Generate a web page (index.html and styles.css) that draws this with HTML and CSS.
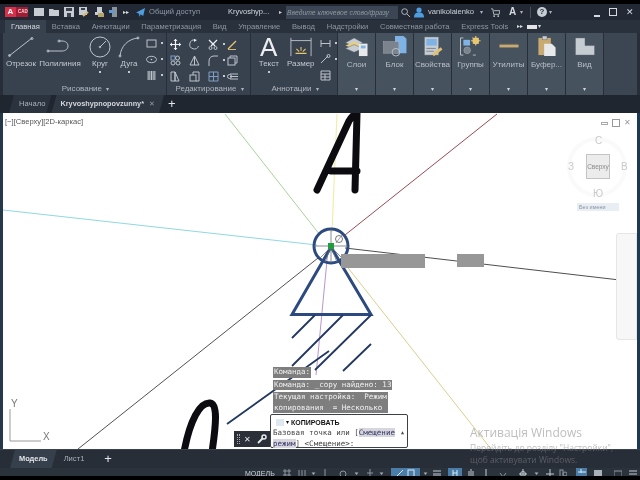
FILE: index.html
```html
<!DOCTYPE html>
<html lang="ru">
<head>
<meta charset="utf-8">
<title>AutoCAD</title>
<link rel="stylesheet" href="styles.css">
</head>
<body>
<div class="app">
  <header class="titlebar">
    <div class="logo"><span class="logo-a">A</span><span class="logo-cad">CAD</span></div>
    <div class="qat">
      <svg class="q" viewBox="0 0 10 10"><rect class="fl" x="0" y="1" width="10" height="8"/></svg>
      <svg class="q" viewBox="0 0 10 10"><path class="fl" d="M0 2h4l1 1h5v6H0z"/></svg>
      <svg class="q" viewBox="0 0 10 10"><path class="fl" d="M0 0h10v10H0z"/><rect class="dk" x="2" y="1" width="6" height="3"/><rect class="dk" x="3" y="6" width="4" height="4"/></svg>
      <svg class="q" viewBox="0 0 10 10"><path class="fl" d="M0 0h8v8H0z"/><rect class="dk" x="2" y="1" width="4" height="2"/><path class="pen" d="M4 9l5-4"/></svg>
      <svg class="q" viewBox="0 0 10 10"><path class="fl" d="M3 0h5v5H3z"/><path class="fl" d="M1 5h8v3H1z"/><path class="tan" d="M4 6h6v4H4z"/></svg>
      <svg class="q" viewBox="0 0 10 10"><path class="gr" d="M3 0h5v10H3z"/><path class="bl" d="M0 3h5v3H0z"/></svg>
    </div>
    <span class="more">&#9656;&#9656;</span>
    <svg class="plane" viewBox="0 0 10 10"><path class="bl2" d="M0 5L10 0 8 9 5 7 4 10 3 6z"/></svg>
    <span class="share">Общий доступ</span>
    <span class="docname">Kryvoshyp...</span>
    <span class="chev">&#9656;</span>
    <span class="search">Введите ключевое слово/фразу</span>
    <svg class="sicon" viewBox="0 0 10 10"><circle class="s" cx="4" cy="4" r="3.2"/><path class="s" d="M6.5 6.5L10 10"/></svg>
    <svg class="user" viewBox="0 0 10 10"><circle class="bl2" cx="5" cy="2.6" r="2.6"/><path class="bl2" d="M0 10c0-4 2-5 5-5s5 1 5 5z"/></svg>
    <span class="uname">vanikolaienko</span>
    <span class="caret t1">&#9662;</span>
    <svg class="cart" viewBox="0 0 10 10"><path class="s" d="M0 1h2l1 6h6l1-4H3"/><circle class="gf" cx="3.5" cy="9" r="1"/><circle class="gf" cx="8" cy="9" r="1"/></svg>
    <span class="a360">A</span>
    <span class="caret t2">&#9662;</span>
    <span class="sep"></span>
    <span class="help">?</span>
    <span class="caret t3">&#9662;</span>
    <div class="winctl">
      <span class="wmin"></span><span class="wmax"></span><span class="wclose">&#10005;</span>
    </div>
  </header>

  <nav class="tabs">
    <span class="tab on">Главная</span>
    <span class="tab">Вставка</span>
    <span class="tab">Аннотации</span>
    <span class="tab">Параметризация</span>
    <span class="tab">Вид</span>
    <span class="tab">Управление</span>
    <span class="tab">Вывод</span>
    <span class="tab">Надстройки</span>
    <span class="tab">Совместная работа</span>
    <span class="tab">Express Tools</span>
    <span class="tab-more">&#9656;&#9656;</span>
    <span class="tab-chip"></span>
    <span class="tab-caret">&#9662;</span>
  </nav>

  <section class="ribbon">
    <div class="panel p-draw">
      <div class="tools">
        <div class="big w-line"><svg class="bi" viewBox="0 0 28 22"><path class="s" d="M2 20L25 2"/><circle class="s" cx="2.5" cy="19.5" r="1"/><circle class="s" cx="25" cy="2.5" r="1"/></svg><span>Отрезок</span></div>
        <div class="big w-poly"><svg class="bi" viewBox="0 0 28 22"><path class="s" d="M2 15H16C24 15 24 5 16 5H13"/><circle class="s" cx="2" cy="15" r="1"/><circle class="s" cx="13" cy="5" r="1"/></svg><span>Полилиния</span></div>
        <div class="big w-circle"><svg class="bi" viewBox="0 0 22 22"><circle class="s" cx="11" cy="11" r="10"/><path class="s" d="M11 11L17 5"/><circle class="s" cx="11" cy="11" r=".8"/></svg><span>Круг</span><i class="dot"></i></div>
        <div class="big w-arc"><svg class="bi" viewBox="0 0 22 22"><path class="s" d="M2 20C3 10 10 3 20 2"/><circle class="s" cx="2" cy="20" r="1"/><circle class="s" cx="20" cy="2" r="1"/></svg><span>Дуга</span><i class="dot"></i></div>
        <div class="small-col">
          <div class="si"><svg class="sm" viewBox="0 0 11 11"><rect class="s" x="1" y="2" width="9" height="7"/></svg><i class="dot"></i></div>
          <div class="si"><svg class="sm" viewBox="0 0 11 11"><ellipse class="s" cx="5.5" cy="5.5" rx="5" ry="3.2"/><circle class="gf" cx="5.5" cy="5.5" r=".8"/></svg><i class="dot"></i></div>
          <div class="si"><svg class="sm" viewBox="0 0 11 11"><rect class="hatch" x="1" y="1" width="9" height="9"/><path class="s" d="M3 1v9M5.500 1v9M8 1v9"/></svg><i class="dot"></i></div>
        </div>
      </div>
      <div class="ptitle">Рисование <b>&#9662;</b></div>
    </div>

    <div class="panel p-edit">
      <div class="tools edit-grid">
        <svg class="sm" viewBox="0 0 11 11"><path class="w" d="M5.500 0v11M0 5.500h11"/><path class="wf" d="M5.500 0l2 2h-4zM5.500 11l2-2h-4zM0 5.500l2-2v4zM11 5.500l-2-2v4z"/></svg>
        <svg class="sm" viewBox="0 0 11 11"><path class="s" d="M9.500 7A4.500 4.500 0 1 1 6 1"/><path class="wf" d="M5 0l3 1-3 2z"/></svg>
        <div class="si"><svg class="sm" viewBox="0 0 11 11"><path class="w" d="M1 1l6 6M9 1L3 7"/><circle class="s" cx="2.500" cy="9" r="1.500"/><circle class="s" cx="7.500" cy="9" r="1.500"/></svg><i class="dot"></i></div>
        <svg class="sm" viewBox="0 0 11 11"><path class="yl" d="M1 10L9 2"/><path class="pen" d="M1 11h8"/></svg>
        <svg class="sm" viewBox="0 0 11 11"><rect class="sb" x="1" y="1" width="4" height="4"/><circle class="s" cx="7.500" cy="3" r="2"/><circle class="s" cx="3" cy="8" r="2"/><circle class="s" cx="8" cy="8" r="2"/></svg>
        <svg class="sm" viewBox="0 0 11 11"><path class="s" d="M5.500 1L10 10H1zM5.500 1v9"/></svg>
        <div class="si"><svg class="sm" viewBox="0 0 11 11"><path class="s" d="M1 11V6C1 3 3 1 6 1h4"/></svg><i class="dot"></i></div>
        <svg class="sm" viewBox="0 0 11 11"><rect class="s" x="1" y="3" width="7" height="7"/><path class="s" d="M3 3V1h7v7H8"/></svg>
        <svg class="sm" viewBox="0 0 11 11"><path class="s" d="M1 1h4v9H1zM5 1l4 9H5z"/></svg>
        <svg class="sm" viewBox="0 0 11 11"><rect class="s" x="1" y="4" width="6" height="6"/><path class="s" d="M4 4V1h6v9H7"/></svg>
        <div class="si"><svg class="sm" viewBox="0 0 11 11"><path class="sb" d="M1 1h9v9H1zM5.500 1v9M1 5.500h9"/></svg><i class="dot"></i></div>
        <svg class="sm" viewBox="0 0 11 11"><path class="s" d="M3 3h8M3 8h8M3 5.500h8"/><circle class="s" cx="2.500" cy="5.500" r="2"/></svg>
      </div>
      <div class="ptitle">Редактирование <b>&#9662;</b></div>
    </div>

    <div class="panel p-annot">
      <div class="tools">
        <div class="big w-text"><span class="bigA">A</span><span>Текст</span><i class="dot"></i></div>
        <div class="big w-dim"><svg class="bi" viewBox="0 0 24 22"><path class="s" d="M1 1v20M23 1v20M1 4h22"/><path class="yl" d="M12 11v4M7 13l3 3M17 13l-3 3M6 18h12"/></svg><span>Размер</span></div>
        <div class="small-col">
          <div class="si"><svg class="sm" viewBox="0 0 11 11"><path class="s" d="M1 2v7M10 2v7M1 5.500h9"/></svg><i class="dot"></i></div>
          <div class="si"><svg class="sm" viewBox="0 0 11 11"><path class="s" d="M1 9L8 2"/><circle class="s" cx="8.500" cy="2" r="1.500"/></svg><i class="dot"></i></div>
          <div class="si"><svg class="sm" viewBox="0 0 11 11"><path class="s" d="M1 1h9v9H1zM1 4h9M1 7h9M5 4v6"/></svg></div>
        </div>
      </div>
      <div class="ptitle">Аннотации <b>&#9662;</b></div>
    </div>

    <div class="coll">
      <svg class="ci" viewBox="0 0 26 22"><path class="lg" d="M1 7l9-5 9 5-9 4z"/><path class="ly" d="M1 10l9-4 9 4-9 4z"/><path class="lg" d="M1 13l9-4 9 4-9 4z"/><rect class="lw" x="15" y="8" width="9" height="13"/><rect class="lb" x="17" y="10" width="5" height="3"/></svg>
      <span>Слои</span><b>&#9662;</b>
    </div>
    <div class="coll">
      <svg class="ci" viewBox="0 0 26 22"><path class="lb" d="M13 0h9l3 3v15H13z"/><rect class="lm" x="1" y="6" width="16" height="12"/><circle class="ol" cx="14" cy="17" r="4"/></svg>
      <span>Блок</span><b>&#9662;</b>
    </div>
    <div class="coll">
      <svg class="ci" viewBox="0 0 26 22"><rect class="lg" x="4" y="1" width="15" height="19"/><rect class="lb" x="6" y="3" width="11" height="7"/><path class="ln" d="M6 13h10M6 16h8"/><path class="pn" d="M13 20l9-7"/></svg>
      <span>Свойства</span><b>&#9662;</b>
    </div>
    <div class="coll">
      <svg class="ci" viewBox="0 0 26 22"><path class="ol" d="M5 2H2v18h3M15 2h-1M18 20h-3"/><rect class="lb" x="5" y="4" width="7" height="6"/><circle class="lm" cx="9" cy="15" r="3.500"/><circle class="ly" cx="18" cy="5" r="3.500"/><path class="yl" d="M18 0v10M13 5h10M15 2l6 6M21 2l-6 6"/></svg>
      <span>Группы</span><b>&#9662;</b>
    </div>
    <div class="coll">
      <svg class="ci" viewBox="0 0 26 22"><rect class="lt" x="3" y="9" width="20" height="3"/><path class="ln2" d="M5 8v1M8 8v1M11 8v1M14 8v1M17 8v1M20 8v1"/></svg>
      <span>Утилиты</span><b>&#9662;</b>
    </div>
    <div class="coll">
      <svg class="ci" viewBox="0 0 26 22"><rect class="lt" x="4" y="2" width="13" height="18"/><rect class="lg" x="8" y="0" width="5" height="4"/><path class="lw" d="M10 8h8l4 4v9H10z"/></svg>
      <span>Буфер...</span><b>&#9662;</b>
    </div>
    <div class="coll">
      <svg class="ci" viewBox="0 0 26 22"><path class="lg" d="M3 2h10v8h10v10H3z"/></svg>
      <span>Вид</span><b>&#9662;</b>
    </div>
    <div class="rib-end"></div>
  </section>

  <nav class="filetabs">
    <span class="ft">Начало</span>
    <span class="ft active">Kryvoshypnopovzunny* <i>&#10005;</i></span>
    <span class="ft-plus">+</span>
  </nav>

  <main class="viewport">
    <svg class="draw" viewBox="3 113 634 336">
      <circle class="ring" cx="597" cy="167" r="28"/>
      <path class="c-green" d="M225 114L320 235"/>
      <path class="c-red" d="M497 114L345 235"/>
      <path class="c-cyan" d="M3 210L317 245"/>
      <path class="c-yellow" d="M337 114L332 232"/>
      <path class="c-tan" d="M345 264L491 449"/>
      <path class="c-purple" d="M328 250L316 375"/>
      <path class="c-black" d="M345 248L637 282"/>
      <path class="c-dark" d="M78 449L318 258"/>
      <circle class="navy" cx="331" cy="246" r="17"/>
      <path class="navy" d="M331 247L292 314.500H371Z"/>
      <path class="hair" d="M314 246H348M331 229V263M320 258L331 247L342 258M325 262L331 247L337 262"/>
      <path class="navy2" d="M315 315L292 338M343 315L292 366M371 315L315 370M371 344L343 371M329 351L227 424"/>
      <path class="marker" d="M328 243h6v6h-6z"/>
      <circle class="snap" cx="339" cy="239" r="3.500"/>
      <path class="snapl" d="M336 243L342 235"/>
      <rect class="grayb" x="341" y="254" width="84" height="14"/>
      <rect class="grayb" x="457" y="254" width="27" height="13"/>
      <path class="ink" d="M317 190L349 121Q354 113 357 114L355 190M331 171H357"/>
      <path class="ink" d="M184 452C190 420 200 402 210 403C218 404 216 425 212 452"/>
      <path class="ucs" d="M10 409V441H41"/>
    </svg>

    <div class="vp-label">[−][Сверху][2D-каркас]</div>
    <div class="vp-ctl"><span class="vmin"></span><span class="vbox"></span><span class="vx">&#10005;</span></div>
    <span class="ucs-y">Y</span>
    <span class="ucs-x">X</span>

    <div class="vc">
      <span class="vc-n">С</span>
      <span class="vc-w">З</span>
      <span class="vc-e">В</span>
      <span class="vc-s">Ю</span>
      <div class="vc-cube">Сверху</div>
      <div class="vc-name">Без имени</div>
    </div>
    <div class="navbar"></div>

    <div class="cmd-hist">
      <div class="h">Команда:</div>
      <div class="h">Команда: _copy найдено: 13</div>
      <div class="h">Текущая настройка:  Режим<br>копирования  = Несколько</div>
    </div>
    <div class="cmd-handle"><span class="grip"></span><span class="hx">&#10005;</span><svg class="wrench" viewBox="0 0 10 10"><path class="wr" d="M1 9L6 4"/><circle class="wrc" cx="7" cy="3" r="2"/></svg></div>
    <div class="cmd-box">
      <div class="cmd-head"><span class="cmd-ic"></span><span class="cmd-ca">&#9662;</span><b>КОПИРОВАТЬ</b></div>
      <div class="cmd-line">Базовая точка или [<mark>Смещение</mark><span class="cmd-up">&#9650;</span></div>
      <div class="cmd-line"><mark>режим</mark>] &lt;Смещение&gt;:</div>
    </div>
  </main>

  <nav class="modeltabs">
    <span class="mt active">Модель</span>
    <span class="mt">Лист1</span>
    <span class="mt-plus">+</span>
  </nav>

  <footer class="status">
    <span class="st-model">МОДЕЛЬ</span>
    <svg class="ti m9" viewBox="0 0 8 8"><path class="si1" d="M2 0v8M6 0v8M0 2h8M0 6h8"/></svg>
    <svg class="ti m7" viewBox="0 0 8 8"><path class="si1" d="M1 1v7M4 1v7M7 1v7"/></svg>
    <svg class="ti m5 tiny" viewBox="0 0 8 8"><path class="si2" d="M1 3h6L4 7z"/></svg>
    <svg class="ti m5" viewBox="0 0 8 8"><path class="si1" d="M4 0v8"/></svg>
    <svg class="ti m10" viewBox="0 0 8 8"><circle class="si1" cx="4" cy="5" r="3"/></svg>
    <svg class="ti m7 tiny" viewBox="0 0 8 8"><path class="si2" d="M1 3h6L4 7z"/></svg>
    <svg class="ti m7" viewBox="0 0 8 8"><path class="si1" d="M4 0v8M1 4h6"/></svg>
    <svg class="ti m5 tiny" viewBox="0 0 8 8"><path class="si2" d="M1 3h6L4 7z"/></svg>
    <span class="blue-group bw29 m7"><svg class="ti" viewBox="0 0 8 8"><path class="si3" d="M1 7L7 1"/></svg><svg class="ti" viewBox="0 0 8 8"><rect class="si3" x="1" y="1" width="6" height="7"/></svg></span>
    <svg class="ti m3 tiny" viewBox="0 0 8 8"><path class="si2" d="M1 3h6L4 7z"/></svg>
    <svg class="ti m5" viewBox="0 0 8 8"><path class="si4" d="M0 2h8M0 5h8M0 7h8"/></svg>
    <span class="blue-group bw14 m7"><svg class="ti" viewBox="0 0 8 8"><path class="si3" d="M2 1v7M6 1v7M2 4h4"/></svg></span>
    <svg class="ti m5" viewBox="0 0 8 8"><path class="si4" d="M2 2v6M6 2v6M4 0v8"/></svg>
    <svg class="ti m7" viewBox="0 0 8 8"><path class="si4" d="M4 0v8M1 8h6"/></svg>
    <svg class="ti m9" viewBox="0 0 8 8"><path class="si1" d="M1 4l3 4 3-4"/></svg>
    <svg class="ti m12" viewBox="0 0 8 8"><circle class="si4" cx="4" cy="5" r="2.500"/><path class="si4" d="M4 0v8M0 5h8"/></svg>
    <svg class="ti m7 tiny" viewBox="0 0 8 8"><path class="si2" d="M1 3h6L4 7z"/></svg>
    <svg class="ti m7" viewBox="0 0 8 8"><path class="si4" d="M4 0v8M0 5h8"/></svg>
    <svg class="ti m5" viewBox="0 0 8 8"><rect class="si1" x="1" y="1" width="3" height="7"/><circle class="si1" cx="6" cy="5" r="2"/></svg>
    <span class="blue-group bw11 m9"><svg class="ti" viewBox="0 0 8 8"><path class="si3" d="M0 3h8M3 0v4"/></svg></span>
    <svg class="ti m7" viewBox="0 0 8 8"><rect class="si5" x="0" y="1" width="8" height="7"/></svg>
    <svg class="ti m12" viewBox="0 0 8 8"><rect class="si1" x="0" y="2" width="8" height="6"/></svg>
    <svg class="ti m7" viewBox="0 0 8 8"><path class="si4" d="M0 2h8M0 5h8"/></svg>
  </footer>

  <div class="watermark">
    <div class="wm1">Активація Windows</div>
    <div class="wm2">Перейдіть до розділу "Настройки",</div>
    <div class="wm2">щоб активувати Windows.</div>
  </div>
</div>
</body>
</html>
```

FILE: styles.css
```css
* { box-sizing: border-box; }
html, body { margin: 0; padding: 0; background: #000; }
body { width: 640px; height: 480px; overflow: hidden; font-family: "Liberation Sans", Arial, sans-serif; }
.app { position: relative; width: 640px; height: 480px; padding: 4px 0; display: flex; flex-direction: column; background: #000; filter: blur(.45px); overflow: hidden; }

/* svg primitives */
.s { fill: none; stroke: #bcc3cb; stroke-width: 1; }
.sb { fill: none; stroke: #7f9fc4; stroke-width: 1; }
.w { fill: none; stroke: #f2f4f6; stroke-width: 1.200; }
.wf { fill: #f2f4f6; }
.gf { fill: #c3cad2; }
.fl { fill: #c7ccd2; }
.dk { fill: #3a4250; }
.gr { fill: #8a929c; }
.bl { fill: #5b9bd5; }
.bl2 { fill: #4d9de0; }
.tan { fill: #b9a468; }
.pen { fill: none; stroke: #d8b770; stroke-width: 2; }
.yl { fill: none; stroke: #e6c66e; stroke-width: 1.200; }
.hatch { fill: #6c747e; }
.lg { fill: #c7ccd2; stroke: #59626e; stroke-width: .5; }
.ly { fill: #e9cf7a; }
.lw { fill: #e6e8ea; }
.lb { fill: #7fb2e5; }
.lm { fill: #7b838d; stroke: #a9b0b8; stroke-width: .5; }
.lt { fill: #c9ab72; }
.ol { fill: none; stroke: #b9c0c8; stroke-width: 1; }
.ln { fill: none; stroke: #7b838d; stroke-width: 1; }
.ln2 { fill: none; stroke: #8c7a52; stroke-width: 1; }
.pn { fill: none; stroke: #e0bf6e; stroke-width: 3; }
.wr { fill: none; stroke: #e8eaec; stroke-width: 1.800; }
.wrc { fill: none; stroke: #e8eaec; stroke-width: 1.500; }

/* title bar */
.titlebar { height: 16px; flex: none; display: flex; align-items: center; background: #222934; color: #c8ced6; font-size: 7.500px; line-height: 10px; padding-left: 5px; }
.logo { display: flex; width: 23px; height: 10px; background: #a31c33; }
.logo-a { width: 11px; background: #d9304a; color: #fff; font-size: 8px; font-weight: bold; line-height: 10px; text-align: center; }
.logo-cad { color: #f4d7dc; font-size: 4.500px; font-weight: bold; line-height: 10px; padding-left: 2px; }
.qat { display: flex; gap: 5px; margin-left: 6px; }
.q { width: 10px; height: 10px; display: block; }
.more { width: 12px; margin-left: 4px; font-size: 6px; color: #d7dbe0; }
.plane { width: 9px; height: 9px; margin-left: 1px; }
.share { margin-left: 4px; width: 79px; font-size: 7.600px; color: #8f99a6; }
.docname { width: 51px; color: #d4d8de; }
.chev { width: 7px; font-size: 6px; color: #c6ccd3; }
.search { width: 112px; height: 13px; background: #3c4553; color: #8f98a4; font-style: italic; font-size: 6.800px; line-height: 13px; padding-left: 1px; white-space: nowrap; }
.sicon { width: 9px; height: 9px; margin-left: 3px; }
.user { width: 10px; height: 11px; margin-left: 4px; }
.uname { margin-left: 4px; width: 47px; color: #cdd2d8; font-size: 7.600px; }
.caret { font-size: 6px; color: #aab1ba; }
.t1 { width: 16px; padding-left: 5px; }
.cart { width: 9px; height: 9px; }
.a360 { margin-left: 9px; width: 11px; font-size: 10px; font-weight: bold; color: #d7dbe0; }
.t2 { width: 8px; }
.sep { width: 1px; height: 11px; background: #4a525e; margin-left: 2px; }
.help { margin-left: 6px; width: 10px; height: 10px; border-radius: 50%; background: #c6ccd3; color: #2a323d; font-size: 8px; font-weight: bold; line-height: 10px; text-align: center; }
.t3 { margin-left: 2px; width: 6px; }
.winctl { margin-left: auto; display: flex; align-items: center; gap: 9px; padding-right: 6px; }
.wmin { width: 6px; height: 2px; background: #d5d9de; margin-top: 7px; }
.wmax { width: 8px; height: 8px; border: 1px solid #d5d9de; }
.wclose { font-size: 9px; color: #d5d9de; line-height: 10px; }

/* tabs */
.tabs { height: 13px; flex: none; display: flex; align-items: stretch; background: #29313c; padding-left: 5px; color: #8e98a4; font-size: 7.600px; line-height: 13px; }
.tab { padding: 0 5.850px; white-space: nowrap; }
.tab.on { padding: 0 6px; background: #38414e; color: #d6dade; }
.tab-more { margin-left: 3px; font-size: 6px; color: #d5d9de; }
.tab-chip { width: 10px; height: 4px; margin: 5px 0 0 4px; background: #e2e4e7; }
.tab-caret { font-size: 6px; margin-left: 1px; color: #d5d9de; }

/* ribbon */
.ribbon { height: 62px; flex: none; display: flex; gap: 1px; background: #272e39; padding: 0 3px; }
.panel { display: flex; flex-direction: column; background: #38414e; color: #c2c9d1; font-size: 8px; }
.p-draw { width: 163px; }
.p-edit { width: 83px; }
.p-annot { width: 86px; }
.tools { flex: 1; display: flex; padding-top: 3px; min-height: 0; }
.ptitle { height: 12px; line-height: 11px; text-align: center; font-size: 8px; color: #aeb6bf; padding-left: 2px; }
.ptitle b { font-size: 6px; font-weight: normal; margin-left: 2px; }
.big { display: flex; flex-direction: column; align-items: center; font-size: 8px; line-height: 10px; white-space: nowrap; }
.bi { width: 28px; height: 22px; display: block; margin-bottom: 1px; }
.w-line { width: 36px; }
.w-poly { width: 42px; }
.w-circle { width: 34px; margin-left: 2px; }
.w-arc { width: 24px; }
.w-circle .bi, .w-arc .bi { width: 22px; }
.dot { width: 2px; height: 2px; margin-top: 2px; background: #c3cad2; display: block; }
.small-col { display: flex; flex-direction: column; gap: 4px; padding: 1px 0 0 5px; }
.si { display: flex; align-items: center; gap: 4px; height: 12px; }
.si .dot { margin: 0; }
.sm { width: 11px; height: 11px; display: block; }
.edit-grid { display: grid; grid-template-columns: repeat(4, 19px); grid-auto-rows: 16px; padding: 3px 0 0 3px; align-items: center; justify-items: start; }
.w-text { width: 40px; }
.bigA { font-size: 26px; line-height: 22px; height: 23px; color: #eceef0; font-family: "Liberation Sans", sans-serif; }
.w-dim { width: 32px; }
.w-dim .bi { width: 22px; }

.coll { width: 37px; display: flex; flex-direction: column; align-items: center; background: #47525f; color: #b7bfc8; font-size: 8px; padding-top: 3px; }
.ci { width: 26px; height: 21px; display: block; }
.coll span { margin-top: 3px; line-height: 10px; white-space: nowrap; }
.coll b { margin-top: auto; font-size: 6px; font-weight: normal; line-height: 11px; color: #cfd4da; }
.rib-end { flex: 1; background: #3c4552; }

/* file tabs */
.filetabs { height: 18px; flex: none; display: flex; align-items: stretch; background: #1f2630; padding-left: 9px; font-size: 7.600px; line-height: 18px; color: #a9b1ba; }
.ft { padding: 0 6px 0 10px; background: #2b333e; clip-path: polygon(5px 0, 100% 0, calc(100% - 5px) 100%, 0 100%); }
.ft.active { margin-left: 0; padding: 0 9px 0 9px; background: #2f3743; color: #d4d8dd; font-size: 7.300px; font-weight: bold; }
.ft.active i { font-style: normal; font-weight: normal; color: #8f98a3; margin-left: 3px; font-size: 7px; }
.ft-plus { margin-left: 4px; font-size: 13px; color: #e5e7ea; line-height: 17px; }

/* viewport */
.viewport { position: relative; flex: 1; min-height: 0; background: #fff; border-left: 3px solid #26394b; border-right: 3px solid #1e3a52; overflow: hidden; }
.draw { position: absolute; left: 0; top: 0; width: 634px; height: 336px; display: block; }
.ring { fill: none; stroke: #fafafa; stroke-width: 4; }
.c-green { stroke: #a8d49c; fill: none; stroke-width: 1; }
.c-red { stroke: #9c4a52; fill: none; stroke-width: 1; }
.c-cyan { stroke: #8fd8e2; fill: none; stroke-width: 1; }
.c-yellow { stroke: #f0eeaa; fill: none; stroke-width: 1.200; }
.c-tan { stroke: #d9cf8e; fill: none; stroke-width: 1; }
.c-purple { stroke: #b894d0; fill: none; stroke-width: 1; }
.c-black { stroke: #3a3a3a; fill: none; stroke-width: .9; }
.c-dark { stroke: #55504e; fill: none; stroke-width: 1; }
.navy { fill: none; stroke: #2c4a80; stroke-width: 3; }
.navy2 { fill: none; stroke: #22385f; stroke-width: 1.800; }
.hair { fill: none; stroke: #68707a; stroke-width: .8; }
.marker { fill: #1f9d3a; }
.snap { fill: none; stroke: #555; stroke-width: .8; }
.snapl { stroke: #777; stroke-width: .7; }
.grayb { fill: #979797; }
.ink { fill: none; stroke: #0b0b10; stroke-width: 7; stroke-linecap: round; stroke-linejoin: round; }
.ucs { fill: none; stroke: #9a9a9a; stroke-width: 1; }
.ucs-y, .ucs-x { position: absolute; font-size: 10px; line-height: 10px; color: #777; }
.ucs-y { left: 8px; top: 286px; }
.ucs-x { left: 40px; top: 319px; }
.vp-label { position: absolute; left: 2px; top: 4px; font-size: 7.600px; line-height: 10px; color: #555; }
.vp-ctl { position: absolute; right: 6px; top: 6px; display: flex; align-items: center; gap: 4px; }
.vmin { width: 7px; height: 3px; border: 1px solid #aaa; }
.vbox { width: 8px; height: 8px; border: 1px solid #999; }
.vx { font-size: 8px; line-height: 8px; color: #999; }

.vc { position: absolute; left: 561px; top: 18px; width: 70px; height: 90px; color: #c9c9c9; font-size: 10px; line-height: 12px; }
.vc-n, .vc-w, .vc-e, .vc-s { position: absolute; }
.vc-n { left: 31px; top: 4px; }
.vc-w { left: 4px; top: 30px; }
.vc-e { left: 57px; top: 30px; }
.vc-s { left: 29px; top: 57px; }
.vc-cube { position: absolute; left: 22px; top: 23px; width: 24px; height: 25px; background: #ececec; border: 1px solid #c4c4c4; color: #8a8a8a; font-size: 6.500px; line-height: 23px; text-align: center; }
.vc-name { position: absolute; left: 13px; top: 72px; width: 42px; height: 8px; background: #e9eef5; color: #8b93a0; font-size: 5.500px; line-height: 8px; padding-left: 2px; }
.navbar { position: absolute; right: 0; top: 120px; width: 21px; height: 107px; background: #f7f7f7; border: 1px solid #e6e6e6; border-radius: 3px 0 0 3px; }

.cmd-hist { position: absolute; left: 270px; top: 254px; display: flex; flex-direction: column; align-items: flex-start; gap: 2px; }
.h { background: #7e7e7e; color: #f0f0f0; font-family: "DejaVu Sans Mono", monospace; font-size: 7.500px; line-height: 10.500px; padding: 0 1px; white-space: pre; }
.cmd-handle { position: absolute; left: 231px; top: 318px; width: 36px; height: 16px; background: #2a2f38; display: flex; align-items: center; padding-left: 3px; color: #e8eaec; }
.grip { width: 3px; height: 10px; border-left: 1px dotted #aaa; border-right: 1px dotted #aaa; }
.hx { font-size: 8px; margin-left: 4px; }
.wrench { width: 10px; height: 10px; margin-left: 6px; }
.cmd-box { position: absolute; left: 267px; top: 301px; width: 138px; height: 34px; background: #fff; border: 1px solid #3c4048; border-radius: 2px; padding: 2px 2px 0; color: #444; font-family: "DejaVu Sans Mono", monospace; font-size: 7.500px; line-height: 11px; }
.cmd-head { display: flex; align-items: center; height: 10px; font-family: "Liberation Sans", sans-serif; font-size: 7px; color: #111; }
.cmd-ic { width: 8px; height: 7px; background: #dfe8ee; margin-left: 3px; }
.cmd-ca { font-size: 6px; margin: 0 2px; }
.cmd-line { white-space: pre; height: 11px; position: relative; }
.cmd-line mark { background: #d6d6dc; color: #33336a; }
.cmd-up { position: absolute; right: 1px; top: 0; font-size: 5px; color: #444; }

/* model tabs */
.modeltabs { height: 19px; flex: none; display: flex; align-items: stretch; background: #272e38; border-top: 1px solid #3a424d; padding-left: 10px; font-size: 7.600px; line-height: 18px; color: #a9b1ba; }
.mt { padding: 0 9px; }
.mt.active { background: #36404c; color: #e4e6e9; font-size: 7.400px; font-weight: bold; clip-path: polygon(5px 0, 100% 0, calc(100% - 5px) 100%, 0 100%); }
.mt:not(.active) { margin-left: 0; padding: 0 8px 0 7px; }
.mt-plus { margin-left: 12px; font-size: 13px; line-height: 17px; color: #e5e7ea; }

/* status */
.status { height: 8px; flex: none; display: flex; align-items: flex-start; background: #2a323c; padding-left: 245px; overflow: hidden; color: #cdd2d8; font-size: 7px; line-height: 11px; }
.st-model { width: 29px; height: 8px; white-space: nowrap; }
.ti { width: 8px; height: 8px; flex: none; display: block; margin-top: 1px; }
.tiny { width: 5px; }
.m3 { margin-left: 3px; }
.m5 { margin-left: 5px; }
.m7 { margin-left: 7px; }
.m9 { margin-left: 9px; }
.m10 { margin-left: 10px; }
.m12 { margin-left: 12px; }
.si1 { fill: none; stroke: #8d96a1; stroke-width: 1; }
.si2 { fill: #a8b0b9; }
.si3 { fill: none; stroke: #dfe9f3; stroke-width: 1; }
.si4 { fill: none; stroke: #c5cbd2; stroke-width: 1; }
.si5 { fill: #aab1ba; }
.blue-group { display: flex; height: 8px; flex: none; background: #4a7ea8; }
.bw29 { width: 29px; padding: 0 5px; gap: 3px; }
.bw14 { width: 14px; padding: 0 3px; }
.bw11 { width: 11px; padding: 0 1.500px; }

.watermark { position: absolute; left: 470px; top: 424px; color: rgba(135,135,135,.55); font-family: "Open Sans", sans-serif; }
.wm1 { font-size: 12px; line-height: 18px; }
.wm2 { font-size: 8.500px; line-height: 12px; }
```
